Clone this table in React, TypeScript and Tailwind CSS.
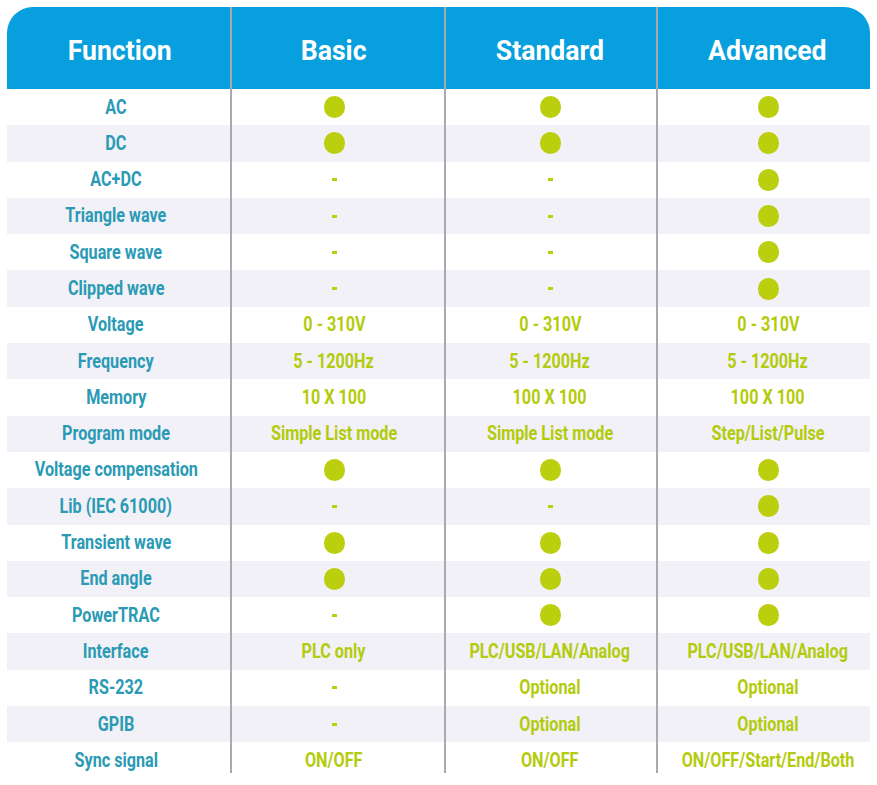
type Cell = 'dot' | 'dash' | string

interface Row {
  label: string
  values: [Cell, Cell, Cell]
}

const rows: Row[] = [
  { label: 'AC', values: ['dot', 'dot', 'dot'] },
  { label: 'DC', values: ['dot', 'dot', 'dot'] },
  { label: 'AC+DC', values: ['dash', 'dash', 'dot'] },
  { label: 'Triangle wave', values: ['dash', 'dash', 'dot'] },
  { label: 'Square wave', values: ['dash', 'dash', 'dot'] },
  { label: 'Clipped wave', values: ['dash', 'dash', 'dot'] },
  { label: 'Voltage', values: ['0 - 310V', '0 - 310V', '0 - 310V'] },
  { label: 'Frequency', values: ['5 - 1200Hz', '5 - 1200Hz', '5 - 1200Hz'] },
  { label: 'Memory', values: ['10 X 100', '100 X 100', '100 X 100'] },
  { label: 'Program mode', values: ['Simple List mode', 'Simple List mode', 'Step/List/Pulse'] },
  { label: 'Voltage compensation', values: ['dot', 'dot', 'dot'] },
  { label: 'Lib (IEC 61000)', values: ['dash', 'dash', 'dot'] },
  { label: 'Transient wave', values: ['dot', 'dot', 'dot'] },
  { label: 'End angle', values: ['dot', 'dot', 'dot'] },
  { label: 'PowerTRAC', values: ['dash', 'dot', 'dot'] },
  { label: 'Interface', values: ['PLC only', 'PLC/USB/LAN/Analog', 'PLC/USB/LAN/Analog'] },
  { label: 'RS-232', values: ['dash', 'Optional', 'Optional'] },
  { label: 'GPIB', values: ['dash', 'Optional', 'Optional'] },
  { label: 'Sync signal', values: ['ON/OFF', 'ON/OFF', 'ON/OFF/Start/End/Both'] },
]

// widths follow the dividers, padding nudges each column's centre
const cols = [
  'w-[223px] pr-[5px]',
  'w-[214px] pr-[6px]',
  'w-[212px]',
  'w-[214px] pl-[10px]',
]

const headCols = [
  'w-[223px] pl-[3px]',
  'w-[214px] pr-[6px]',
  'w-[212px]',
  'w-[214px] pl-[9px]',
]

function ValueCell({ value }: { value: Cell }) {
  if (value === 'dot') {
    return <span className="block w-[21px] h-[22px] rounded-full bg-[#bbcf0e]" />
  }
  if (value === 'dash') {
    return <span className="block w-[5px] h-[3px] bg-[#bbcf0e]" />
  }
  return <span className="inline-block whitespace-nowrap scale-x-[0.83] text-[#b3cb0c]">{value}</span>
}

export default function App() {
  return (
    <div className="w-[877px] h-[785px] bg-white pt-[7px] pl-[7px]">
      <div className="w-[863px] relative">
        <div className="flex h-[82px] bg-[#079fdd] rounded-t-[26px] text-white font-bold text-[28px] font-['Roboto',sans-serif]">
          {['Function', 'Basic', 'Standard', 'Advanced'].map((h, i) => (
            <div key={h} className={`${headCols[i]} flex items-center justify-center pt-[6px]`}>
              <span className="inline-block scale-x-95">{h}</span>
            </div>
          ))}
        </div>
        <div className="font-['Roboto',sans-serif] font-bold text-[19.5px]">
          {rows.map((row, r) => (
            <div
              key={row.label}
              className={`flex h-[36.3px] ${r % 2 === 1 ? 'bg-[#f1f1f7]' : 'bg-white'}`}
            >
              <div className={`${cols[0]} flex items-center justify-center text-[#2a9ab5]`}>
                <span className="inline-block whitespace-nowrap scale-x-[0.83]">{row.label}</span>
              </div>
              {row.values.map((v, i) => (
                <div key={i} className={`${cols[i + 1]} flex items-center justify-center`}>
                  <ValueCell value={v} />
                </div>
              ))}
            </div>
          ))}
        </div>
        {/* column dividers */}
        <div className="absolute top-0 left-[223px] w-[2px] h-[766px] bg-[#a9a9ae]" />
        <div className="absolute top-0 left-[437px] w-[2px] h-[766px] bg-[#a9a9ae]" />
        <div className="absolute top-0 left-[649px] w-[2px] h-[766px] bg-[#a9a9ae]" />
      </div>
    </div>
  )
}
